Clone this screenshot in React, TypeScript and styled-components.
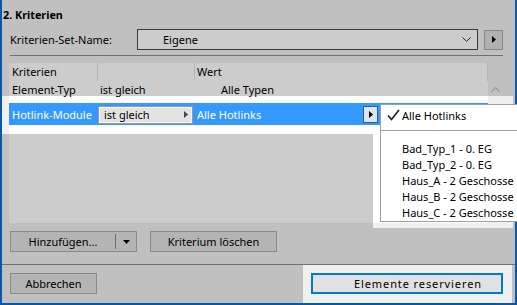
import React from "react";
import styled, { createGlobalStyle } from "styled-components";

const GlobalStyle = createGlobalStyle`
  html, body {
    margin: 0;
    padding: 0;
    background: #f0f0f0;
    overflow: hidden;
  }
  body {
    width: 517px;
    height: 305px;
  }
`;

const FONT = `"Noto Sans", "Open Sans", sans-serif`;

const Window = styled.div`
  position: relative;
  box-sizing: border-box;
  width: 517px;
  height: 305px;
  border: 2px solid #0b6fd4;
  border-top: 0;
  background: #f0f0f0;
  display: flex;
  flex-direction: column;
  font-family: ${FONT};
  font-size: 11px;
  color: #000;
`;

const Title = styled.div`
  margin: 8px 0 0 1px;
  line-height: 14px;
  font-weight: 700;
  font-size: 10.8px;
`;

const SetRow = styled.div`
  display: flex;
  align-items: center;
  height: 21px;
  margin: 7px 12px 0 8px;
`;

const SetLabel = styled.div`
  width: 127px;
`;

const Combo = styled.div`
  box-sizing: border-box;
  width: 341px;
  height: 21px;
  border: 1px solid #4a4a4a;
  background: #fff;
  display: flex;
  align-items: center;
  justify-content: space-between;
  padding: 0 6px 0 25px;
`;

const SquareButton = styled.div`
  box-sizing: border-box;
  width: 19px;
  height: 20px;
  margin-left: 6px;
  border: 1px solid #a9a9a9;
  background: #dcdcdc;
  display: flex;
  align-items: center;
  justify-content: center;
`;

const Rule = styled.div<{ $margin: string }>`
  height: 1px;
  background: #8e8e8e;
  margin: ${(p) => p.$margin};
`;

const TableBox = styled.div`
  display: flex;
  height: 160px;
  margin: 7px 12px 0 7px;
`;

const TableMain = styled.div`
  flex: 1;
  background: #fff;
  display: flex;
  flex-direction: column;
`;

const ScrollBar = styled.div`
  width: 15px;
  background: #f0f0f0;
  padding-top: 18px;
  display: flex;
  flex-direction: column;
  align-items: center;
`;

const ScrollArrow = styled.div`
  height: 17px;
  display: flex;
  align-items: center;
  justify-content: center;
`;

const Row = styled.div<{ $height: number; $selected?: boolean }>`
  display: flex;
  height: ${(p) => p.$height}px;
  align-items: ${(p) => (p.$selected ? "center" : "flex-start")};
  background: ${(p) => (p.$selected ? "#3399ff" : "transparent")};
  color: ${(p) => (p.$selected ? "#fff" : "#000")};
  line-height: 16px;
`;

const Cell = styled.div<{ $width: number; $pad: number; $divider?: boolean }>`
  box-sizing: border-box;
  width: ${(p) => p.$width}px;
  height: 100%;
  padding: 1px 0 0 ${(p) => p.$pad}px;
  display: flex;
  align-items: inherit;
  white-space: nowrap;
  border-right: ${(p) => (p.$divider ? "1px solid #e3e3e3" : "0")};
`;

const Editor = styled.div`
  box-sizing: border-box;
  width: 95px;
  height: 18px;
  border: 1px solid #9a9a9a;
  box-shadow: inset 0 0 0 1px #f4f4f4;
  background: #e3e3e3;
  color: #000;
  display: flex;
  align-items: center;
  justify-content: space-between;
  padding: 0 4px 0 5px;
`;

const ValueText = styled.span`
  width: 166px;
`;

const PickButton = styled.div`
  box-sizing: border-box;
  width: 15px;
  height: 17px;
  border: 1px solid #2c5f93;
  background: #dce6f1;
  display: flex;
  align-items: center;
  justify-content: center;
`;

const Popup = styled.div`
  position: absolute;
  left: 378px;
  top: 104px;
  z-index: 2;
  box-sizing: border-box;
  width: 150px;
  height: 118px;
  background: #fff;
  border: 1px solid #a0a0a0;
  font-size: 11px;
`;

const PopupItem = styled.div<{ $height: number }>`
  display: flex;
  align-items: center;
  height: ${(p) => p.$height}px;
  padding-left: 21px;
  white-space: nowrap;
`;

const Check = styled.span`
  width: 0;
  position: relative;
`;

const PopupRule = styled.div`
  height: 1px;
  background: #a0a0a0;
  margin: 4px 0 9px;
`;

const ActionRow = styled.div`
  display: flex;
  gap: 13px;
  height: 21px;
  margin: 8px 0 0 8px;
`;

const Button = styled.div<{ $width: number; $primary?: boolean }>`
  box-sizing: border-box;
  width: ${(p) => p.$width}px;
  height: 21px;
  background: #e1e1e1;
  border: ${(p) => (p.$primary ? "2px solid #0078d7" : "1px solid #adadad")};
  letter-spacing: ${(p) => (p.$primary ? "0.9px" : "0")};
  padding-left: ${(p) => (p.$primary ? "22px" : "0")};
  display: flex;
  align-items: center;
  justify-content: center;
`;

const SplitMain = styled.div`
  flex: 1;
  height: 100%;
  display: flex;
  align-items: center;
  justify-content: center;
`;

const SplitArrow = styled.div`
  width: 20px;
  height: 15px;
  border-left: 1px solid #8a8a8a;
  display: flex;
  align-items: center;
  justify-content: center;
`;

const Footer = styled.div`
  height: 38px;
  display: flex;
  justify-content: space-between;
  align-items: flex-start;
  padding: 8px 12px 0 8px;
  box-sizing: border-box;
`;

const Dim = styled.div`
  position: absolute;
  left: -2px;
  top: 0;
  width: 517px;
  height: 305px;
  z-index: 1;
  pointer-events: none;
  background: rgba(0, 0, 0, 0.2);
  clip-path: path(
    evenodd,
    "M0 0H517V305H0Z M2 96H513V228H373V134H2Z M303 265H512V303H303Z"
  );
`;

const COLS = [89, 97, 293];

const TriRight = ({ color = "#000" }: { color?: string }) => (
  <svg width="4" height="7" viewBox="0 0 4 7">
    <path d="M0 0L4 3.5L0 7Z" fill={color} />
  </svg>
);

const TriDown = () => (
  <svg width="7" height="4" viewBox="0 0 7 4">
    <path d="M0 0H7L3.5 4Z" fill="#000" />
  </svg>
);

const Chevron = ({ up = false, color = "#333" }: { up?: boolean; color?: string }) => (
  <svg width="9" height="5" viewBox="0 0 9 5">
    <path
      d={up ? "M0.5 4.5L4.5 0.8L8.5 4.5" : "M0.5 0.5L4.5 4.2L8.5 0.5"}
      fill="none"
      stroke={color}
      strokeWidth="1"
    />
  </svg>
);

const hotlinks = [
  "Bad_Typ_1 - 0. EG",
  "Bad_Typ_2 - 0. EG",
  "Haus_A - 2 Geschosse",
  "Haus_B - 2 Geschosse",
  "Haus_C - 2 Geschosse",
];

export default function App() {
  return (
    <>
      <GlobalStyle />
      <Window>
        <Title>2. Kriterien</Title>

        <SetRow>
          <SetLabel>Kriterien-Set-Name:</SetLabel>
          <Combo>
            <span>Eigene</span>
            <Chevron />
          </Combo>
          <SquareButton>
            <TriRight />
          </SquareButton>
        </SetRow>

        <Rule $margin="5px 12px 0 8px" />

        <TableBox>
          <TableMain>
            <Row $height={18}>
              <Cell $width={COLS[0]} $pad={3} $divider>Kriterien</Cell>
              <Cell $width={COLS[1]} $pad={2} $divider></Cell>
              <Cell $width={COLS[2]} $pad={2} $divider>Wert</Cell>
            </Row>
            <Row $height={22}>
              <Cell $width={COLS[0]} $pad={3}>Element-Typ</Cell>
              <Cell $width={COLS[1]} $pad={2}>ist gleich</Cell>
              <Cell $width={COLS[2]} $pad={26}>Alle Typen</Cell>
            </Row>
            <Row $height={22} $selected>
              <Cell $width={COLS[0]} $pad={3}>Hotlink-Module</Cell>
              <Cell $width={COLS[1]} $pad={0}>
                <Editor>
                  <span>ist gleich</span>
                  <TriRight color="#444" />
                </Editor>
              </Cell>
              <Cell $width={COLS[2]} $pad={2}>
                <ValueText>Alle Hotlinks</ValueText>
                <PickButton>
                  <TriRight />
                </PickButton>
              </Cell>
            </Row>
          </TableMain>
          <ScrollBar>
            <ScrollArrow>
              <Chevron up color="#a3a3a3" />
            </ScrollArrow>
          </ScrollBar>
        </TableBox>

        <ActionRow>
          <Button $width={127}>
            <SplitMain>Hinzufügen...</SplitMain>
            <SplitArrow>
              <TriDown />
            </SplitArrow>
          </Button>
          <Button $width={127}>Kriterium löschen</Button>
        </ActionRow>

        <Rule $margin="12px 0 0 0" />

        <Footer>
          <Button $width={87}>Abbrechen</Button>
          <Button $width={192} $primary>
            Elemente reservieren
          </Button>
        </Footer>

        <Dim />

        <Popup>
          <PopupItem $height={21}>
            <Check>
              <svg
                width="13"
                height="12"
                viewBox="0 0 13 12"
                style={{ position: "absolute", left: -15, top: -7 }}
              >
                <path d="M1 6.5L4.5 10.5L12 1" fill="none" stroke="#222" strokeWidth="1.7" />
              </svg>
            </Check>
            Alle Hotlinks
          </PopupItem>
          <PopupRule />
          {hotlinks.map((h) => (
            <PopupItem key={h} $height={16}>
              {h}
            </PopupItem>
          ))}
        </Popup>
      </Window>
    </>
  );
}
